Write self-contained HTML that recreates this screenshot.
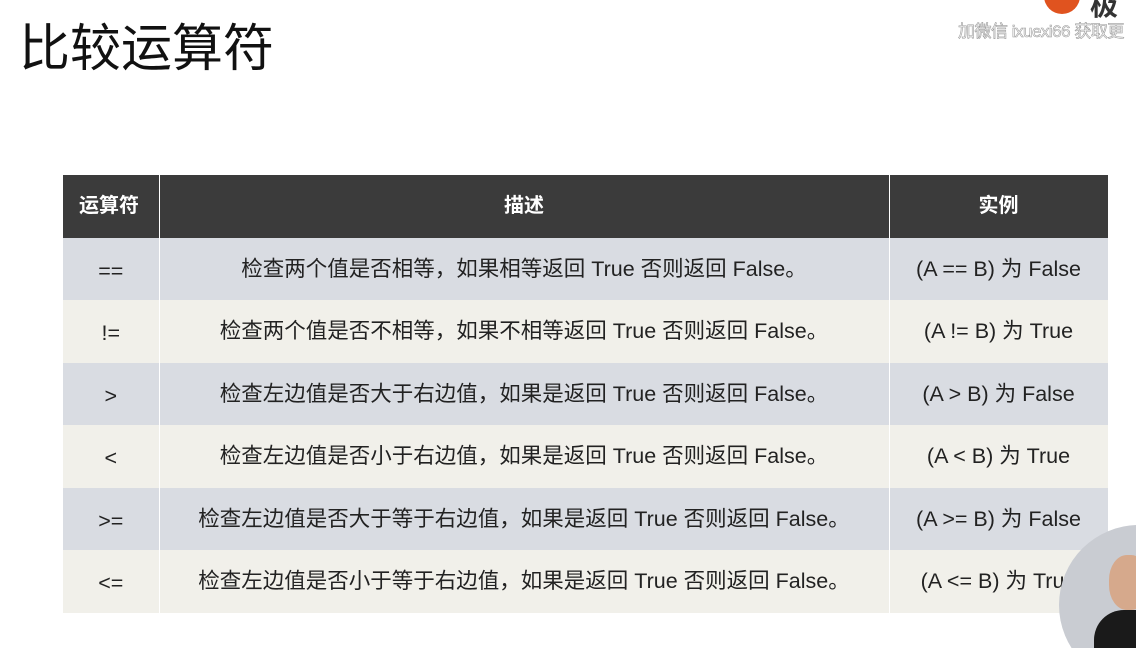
<!DOCTYPE html>
<html><head><meta charset="utf-8"><style>
html,body{margin:0;width:1136px;height:648px;background:#fff;position:relative;overflow:hidden;font-family:"Liberation Sans","Noto Sans CJK SC",sans-serif;}
.title{position:absolute;left:19px;top:16px;font-size:51px;color:#111;line-height:66px;}
.wm{position:absolute;left:958px;top:17px;font-size:17px;color:#fff;-webkit-text-stroke:0.6px #999;letter-spacing:-0.5px;white-space:nowrap;}
.logo{position:absolute;left:1044px;top:-22px;width:36px;height:36px;border-radius:50%;background:#e0531f;}
.logo2{position:absolute;left:1090px;top:-16px;font-size:28px;font-weight:bold;color:#333;}
table{position:absolute;left:63px;top:175px;width:1045px;border-collapse:collapse;table-layout:fixed;}
tr{height:62.5px;}
td,th{padding:0;text-align:center;font-size:21.5px;line-height:24px;color:#222;border-right:1px solid #fff;vertical-align:middle;}
td:first-child span{position:relative;top:2px;}
th{background:#3b3b3b;color:#fff;font-weight:bold;font-size:20px;}
th:first-child{text-align:left;padding-left:16px;}
tbody tr:nth-child(odd) td{background:#d9dce2;}
tbody tr:nth-child(even) td{background:#f1f0ea;}
.clip{position:absolute;left:1000px;top:500px;width:136px;height:148px;overflow:hidden;}
.av{position:absolute;left:59px;top:25px;width:160px;height:160px;border-radius:50%;background:#c9ccd2;overflow:hidden;}
.av div{position:absolute;left:35px;top:85px;width:80px;height:90px;background:#1a1a1a;border-radius:30px 30px 0 0;}
.av span{position:absolute;left:50px;top:30px;width:40px;height:55px;background:#d6a98c;border-radius:45%;}
</style></head><body>
<div class="logo"></div><div class="logo2">极</div>
<div class="wm">加微信 ixuexi66 获取更</div>
<div class="title">比较运算符</div>
<table>
<colgroup><col style="width:96px"><col style="width:730px"><col style="width:219px"></colgroup>
<thead><tr><th>运算符</th><th>描述</th><th>实例</th></tr></thead>
<tbody>
<tr><td><span>==</span></td><td>检查两个值是否相等，如果相等返回 True 否则返回 False。</td><td>(A == B) 为 False</td></tr>
<tr><td><span>!=</span></td><td>检查两个值是否不相等，如果不相等返回 True 否则返回 False。</td><td>(A != B) 为 True</td></tr>
<tr><td><span>&gt;</span></td><td>检查左边值是否大于右边值，如果是返回 True 否则返回 False。</td><td>(A &gt; B) 为 False</td></tr>
<tr><td><span>&lt;</span></td><td>检查左边值是否小于右边值，如果是返回 True 否则返回 False。</td><td>(A &lt; B) 为 True</td></tr>
<tr><td><span>&gt;=</span></td><td>检查左边值是否大于等于右边值，如果是返回 True 否则返回 False。</td><td>(A &gt;= B) 为 False</td></tr>
<tr><td><span>&lt;=</span></td><td>检查左边值是否小于等于右边值，如果是返回 True 否则返回 False。</td><td>(A &lt;= B) 为 True</td></tr>
</tbody>
</table>
<div class="clip"><div class="av"><span></span><div></div></div></div>
</body></html>
